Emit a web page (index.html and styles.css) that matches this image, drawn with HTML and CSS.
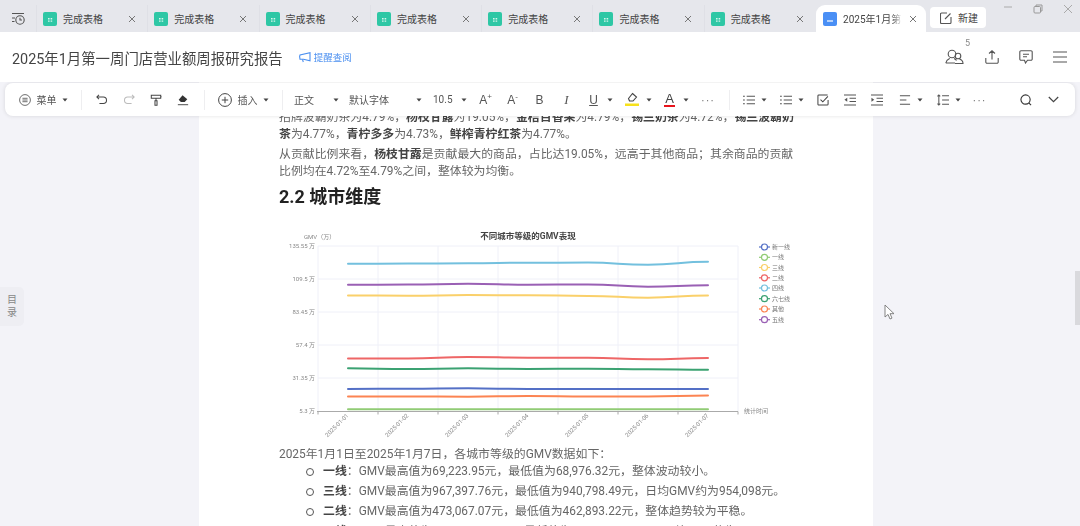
FILE: index.html
```html
<!DOCTYPE html>
<html lang="zh-CN">

<head>
    <meta charset="UTF-8">
    <meta name="viewport" content="width=device-width, initial-scale=1.0">
    <title>2025年1月第一周门店营业额周报研究报告</title>
    <link rel="stylesheet" href="styles.css">
</head>

<body>
    <svg width="0" height="0" class="defs">
        <defs>
            <symbol id="sheet" viewBox="0 0 14 14">
                <rect width="14" height="14" rx="2" fill="#2ec7a5" />
                <path d="M5 6h1.6v1.4H5zM7.6 6h1.6v1.4H7.6zM5 8.4h1.6v1.4H5zM7.6 8.4h1.6v1.4H7.6z" fill="#d6f5ec" />
            </symbol>
            <symbol id="close" viewBox="0 0 8 8">
                <path d="M1 1l6 6M7 1L1 7" stroke="#777" stroke-width="1" fill="none" />
            </symbol>
            <symbol id="caret" viewBox="0 0 6 6">
                <path d="M.5 1.500h5L3 4.500z" fill="#444" />
            </symbol>
            <symbol id="list" viewBox="0 0 13 13">
                <path d="M4 2.500h9M4 6.500h9M4 10.500h9M0 2.500h2M0 6.500h2M0 10.500h2" stroke="#555" stroke-width="1.1" fill="none" />
            </symbol>
        </defs>
    </svg>

    <!-- tab strip -->
    <header class="tabbar">
        <div class="history">
            <svg width="15" height="14" viewBox="0 0 15 14" fill="none" stroke="#555" stroke-width="1.1">
                <path d="M1 1.500h12M1 6h3M1 9.500h2.500" />
                <circle cx="9" cy="8" r="4.200" />
                <path d="M9 5.800V8h2" />
            </svg>
        </div>
        <div class="tab"><svg class="tab-icon"><use href="#sheet" /></svg><span class="tab-name">完成表格</span><svg class="tab-close"><use href="#close" /></svg></div>
        <div class="tab"><svg class="tab-icon"><use href="#sheet" /></svg><span class="tab-name">完成表格</span><svg class="tab-close"><use href="#close" /></svg></div>
        <div class="tab"><svg class="tab-icon"><use href="#sheet" /></svg><span class="tab-name">完成表格</span><svg class="tab-close"><use href="#close" /></svg></div>
        <div class="tab"><svg class="tab-icon"><use href="#sheet" /></svg><span class="tab-name">完成表格</span><svg class="tab-close"><use href="#close" /></svg></div>
        <div class="tab"><svg class="tab-icon"><use href="#sheet" /></svg><span class="tab-name">完成表格</span><svg class="tab-close"><use href="#close" /></svg></div>
        <div class="tab"><svg class="tab-icon"><use href="#sheet" /></svg><span class="tab-name">完成表格</span><svg class="tab-close"><use href="#close" /></svg></div>
        <div class="tab"><svg class="tab-icon"><use href="#sheet" /></svg><span class="tab-name">完成表格</span><svg class="tab-close"><use href="#close" /></svg></div>
        <div class="tab tab-active">
            <svg class="tab-icon" viewBox="0 0 14 14">
                <rect width="14" height="14" rx="2" fill="#4a8ff5" />
                <path d="M4 9h6" stroke="#fff" stroke-width="1.200" />
            </svg>
            <span class="tab-name">2025年1月第</span>
            <svg class="tab-close"><use href="#close" /></svg>
        </div>
        <div class="new-btn">
            <svg width="12" height="12" viewBox="0 0 12 12" fill="none" stroke="#555" stroke-width="1.1">
                <path d="M7 1H1.500a1 1 0 0 0-1 1v8.500a1 1 0 0 0 1 1H10a1 1 0 0 0 1-1V5M5 7l5.500-5.500" />
            </svg>
            <span>新建</span>
        </div>
        <div class="win-controls">
            <svg width="10" height="10" viewBox="0 0 10 10"><path d="M1 3h8" stroke="#aaa" /></svg>
            <svg width="10" height="10" viewBox="0 0 10 10" fill="none" stroke="#999"><rect x="1" y="2.500" width="6.500" height="6.500" rx="1" /><path d="M3 2.500V1h6v6H7.500" /></svg>
            <svg width="10" height="10" viewBox="0 0 10 10"><path d="M1 1l8 8M9 1L1 9" stroke="#aaa" /></svg>
        </div>
    </header>

    <!-- document title row -->
    <section class="titlebar">
        <h1 class="doc-title">2025年1月第一周门店营业额周报研究报告</h1>
        <div class="remind">
            <svg width="12" height="11" viewBox="0 0 12 11" fill="none" stroke="#4a8ff0" stroke-width="1.1">
                <path d="M11 .8v8L4.500 7.200H1L.6 4.500 1 3z" />
                <path d="M3.500 7.500l.8 2.500" />
            </svg>
            <span>提醒查阅</span>
        </div>
        <div class="title-actions">
            <div class="users">
                <svg width="20" height="16" viewBox="0 0 20 16" fill="none" stroke="#555" stroke-width="1.1">
                    <circle cx="7" cy="5" r="3.800" />
                    <path d="M.8 14c.5-3 3-4 4-4.500M9 9.500c1 .5 2 1 2.500 2M.8 14H10" />
                    <circle cx="13" cy="7" r="2.800" />
                    <path d="M10 14.500h8c0-2.500-2-4-3.500-4.500" />
                </svg>
                <span class="users-count">5</span>
            </div>
            <svg width="14" height="14" viewBox="0 0 14 14" fill="none" stroke="#555" stroke-width="1.1">
                <path d="M7 9.500V1M4 3.500L7 .8l3 2.700M.8 8v4a1.200 1.200 0 0 0 1.200 1.200h10a1.200 1.200 0 0 0 1.200-1.200V8" />
            </svg>
            <svg width="14" height="14" viewBox="0 0 14 14" fill="none" stroke="#555" stroke-width="1.1">
                <path d="M2 .8h10a1.200 1.200 0 0 1 1.200 1.200v7A1.200 1.200 0 0 1 12 10.200H8.500L6.500 13l-1-2.800H2A1.200 1.200 0 0 1 .8 9V2A1.200 1.200 0 0 1 2 .8z" />
                <path d="M4 4.200h6M4 6.800h4" />
            </svg>
            <svg width="14" height="12" viewBox="0 0 14 12" stroke="#555" stroke-width="1.1">
                <path d="M0 1h14M0 6h14M0 11h14" />
            </svg>
        </div>
    </section>

    <main class="workspace">
        <!-- floating toolbar -->
        <div class="toolbar">
            <svg class="ico" viewBox="0 0 14 14" fill="none" stroke="#555" stroke-width="1"><circle cx="7" cy="7" r="6.300" /><path d="M4 5h6M4 7h6M4 9h6" /></svg>
            <span class="lbl m5">菜单</span>
            <svg class="caret m5"><use href="#caret" /></svg>
            <i class="sep m13"></i>

            <span class="btn m6"><svg class="ico" viewBox="0 0 14 14" fill="none" stroke="#444" stroke-width="1.200"><path d="M3.500 1L1 3.500 3.500 6M1 3.500h7.500a3.700 3.700 0 0 1 0 7.500H4" /></svg></span>
            <span class="btn"><svg class="ico" viewBox="0 0 14 14" fill="none" stroke="#bbb" stroke-width="1.200"><path d="M10.500 1L13 3.500 10.500 6M13 3.500H5.500a3.700 3.700 0 0 0 0 7.500H10" /></svg></span>
            <span class="btn"><svg class="ico" viewBox="0 0 14 14" fill="none" stroke="#444" stroke-width="1.200"><path d="M1.500 1.500h11v3.500h-11zM12.500 3.200h1M7 5v3M5.800 8h2.400v5H5.800z" /></svg></span>
            <span class="btn"><svg class="ico" viewBox="0 0 14 14"><path d="M6.500 1.500L12 6l-3 3.200H4.500L2 6.800z" fill="#333" /><path d="M1 12.500h12" stroke="#444" stroke-width="1.100" /></svg></span>
            <i class="sep m7"></i>

            <svg class="ico ico-lg m13" viewBox="0 0 14 14" fill="none" stroke="#444" stroke-width="1"><circle cx="7" cy="7" r="6.400" /><path d="M7 3.800v6.400M3.800 7h6.400" /></svg>
            <span class="lbl m5">插入</span>
            <svg class="caret m5"><use href="#caret" /></svg>
            <i class="sep m13"></i>

            <span class="lbl m11">正文</span>
            <svg class="caret m19"><use href="#caret" /></svg>
            <span class="lbl lbl-wide m10">默认字体</span>
            <svg class="caret m26"><use href="#caret" /></svg>
            <span class="lbl m11">10.5</span>
            <svg class="caret m7"><use href="#caret" /></svg>

            <span class="btn txt m5">A<sup>+</sup></span>
            <span class="btn txt">A<sup>-</sup></span>
            <span class="btn txt">B</span>
            <span class="btn txt txt-i">I</span>
            <span class="btn txt txt-u">U</span>
            <svg class="caret"><use href="#caret" /></svg>
            <span class="btn m5">
                <svg width="14" height="15" viewBox="0 0 14 15">
                    <path d="M7.500 1.500L11.500 5 8 9H4.500L3.500 6.500z" fill="none" stroke="#444" stroke-width="1.100" />
                    <rect x="0" y="11.500" width="14" height="2.500" fill="#f7e11b" />
                </svg>
            </span>
            <svg class="caret"><use href="#caret" /></svg>
            <span class="btn color-a m4"><span>A</span></span>
            <svg class="caret"><use href="#caret" /></svg>
            <span class="btn dots m5">···</span>
            <i class="sep m7"></i>

            <span class="btn btn-s m6"><svg class="ico" viewBox="0 0 13 13"><use href="#list" /></svg></span>
            <svg class="caret"><use href="#caret" /></svg>
            <span class="btn btn-s m7"><svg class="ico" viewBox="0 0 13 13"><use href="#list" /></svg></span>
            <svg class="caret"><use href="#caret" /></svg>
            <span class="btn m5"><svg class="ico" viewBox="0 0 13 13" fill="none" stroke="#444" stroke-width="1.100"><path d="M12 6.500V11a1 1 0 0 1-1 1H2a1 1 0 0 1-1-1V2a1 1 0 0 1 1-1h9.500M3.800 6l2.500 2.500L11.800 2.500" /></svg></span>
            <span class="btn"><svg class="ico" viewBox="0 0 13 13" fill="none" stroke="#555" stroke-width="1.100"><path d="M0 1h13M6 4.500h7M6 8h7M0 12h13" /><path d="M3.500 4v4.500L.5 6.200z" fill="#555" stroke="none" /></svg></span>
            <span class="btn"><svg class="ico" viewBox="0 0 13 13" fill="none" stroke="#555" stroke-width="1.100"><path d="M0 1h13M6 4.500h7M6 8h7M0 12h13" /><path d="M.5 4v4.500l3-2.300z" fill="#555" stroke="none" /></svg></span>
            <span class="btn btn-s m2"><svg class="ico" viewBox="0 0 13 13" stroke="#555" stroke-width="1.100"><path d="M1 2h11M1 6.500h7M1 11h11" /></svg></span>
            <svg class="caret"><use href="#caret" /></svg>
            <span class="btn btn-s m7"><svg class="ico" viewBox="0 0 13 13" fill="none" stroke="#555" stroke-width="1.100"><path d="M2 1v11M.5 2.500L2 1l1.500 1.500M.5 10.500L2 12l1.500-1.500M5.500 2H13M5.500 6.500H13M5.500 11H13" /></svg></span>
            <svg class="caret"><use href="#caret" /></svg>
            <span class="btn dots m5">···</span>

            <span class="btn push"><svg class="ico" viewBox="0 0 13 13" fill="none" stroke="#333" stroke-width="1.200"><circle cx="6" cy="6" r="5" /><path d="M9.500 9.500L12 12" /></svg></span>
            <span class="btn"><svg width="11" height="7" viewBox="0 0 11 7" fill="none" stroke="#444" stroke-width="1.200"><path d="M.8 1l4.700 4.700L10.200 1" /></svg></span>
        </div>

        <div class="toc">目<br>录</div>

        <article class="page">
            <p>招牌波霸奶茶为4.79%，<b>杨枝甘露</b>为19.05%，<b>金桔百香果</b>为4.79%，<b>锡兰奶茶</b>为4.72%，<b>锡兰波霸奶茶</b>为4.77%，<b>青柠多多</b>为4.73%，<b>鲜榨青柠红茶</b>为4.77%。</p>
            <p>从贡献比例来看，<b>杨枝甘露</b>是贡献最大的商品，占比达19.05%，远高于其他商品；其余商品的贡献比例均在4.72%至4.79%之间，整体较为均衡。</p>
            <h2>2.2 城市维度</h2>

            <svg class="chart" width="530" height="215" viewBox="280 225 530 215">
                <g class="grid">
                    <path d="M318 245V410M378 245V410M438 245V410M498 245V410M558 245V410M618 245V410M678 245V410M738 245V410" />
                    <path d="M318 245H738M318 278H738M318 311H738M318 344H738M318 377H738" />
                </g>
                <path class="axis" d="M317 410.500H738M318 410.500v3M378 410.500v3M438 410.500v3M498 410.500v3M558 410.500v3M618 410.500v3M678 410.500v3M738 410.500v3" />

                <text class="chart-title" x="528" y="237.500" text-anchor="middle">不同城市等级的GMV表现</text>
                <text class="tick" x="304" y="237.500">GMV（万）</text>
                <text class="tick" x="315" y="247" text-anchor="end">135.55 万</text>
                <text class="tick" x="315" y="280" text-anchor="end">109.5 万</text>
                <text class="tick" x="315" y="313" text-anchor="end">83.45 万</text>
                <text class="tick" x="315" y="346" text-anchor="end">57.4 万</text>
                <text class="tick" x="315" y="379" text-anchor="end">31.35 万</text>
                <text class="tick" x="315" y="412" text-anchor="end">5.3 万</text>
                <text class="tick" x="744" y="412">统计时间</text>

                <text class="tick" text-anchor="end" transform="translate(349 415) rotate(-45)">2025-01-01</text>
                <text class="tick" text-anchor="end" transform="translate(409 415) rotate(-45)">2025-01-02</text>
                <text class="tick" text-anchor="end" transform="translate(469 415) rotate(-45)">2025-01-03</text>
                <text class="tick" text-anchor="end" transform="translate(529 415) rotate(-45)">2025-01-04</text>
                <text class="tick" text-anchor="end" transform="translate(589 415) rotate(-45)">2025-01-05</text>
                <text class="tick" text-anchor="end" transform="translate(649 415) rotate(-45)">2025-01-06</text>
                <text class="tick" text-anchor="end" transform="translate(709 415) rotate(-45)">2025-01-07</text>

                <g class="series">
                    <path stroke="#73c0de" d="M348 262.700C378 262.700 378 262.600 408 262.600S438 262.300 468 262.300S498 261.700 528 261.700S558 261.600 588 261.600S618 263.700 648 263.700S678 260.800 708 260.800" />
                    <path stroke="#9a60b4" d="M348 283.700C378 283.700 378 283.600 408 283.600S438 282.700 468 282.700S498 283.700 528 283.700S558 283.400 588 283.400S618 285.700 648 285.700S678 284.300 708 284.300" />
                    <path stroke="#fad06a" d="M348 294.400C378 294.400 378 294.700 408 294.700S438 294.100 468 294.100S498 294.200 528 294.200S558 295 588 295S618 296.700 648 296.700S678 294.400 708 294.400" />
                    <path stroke="#ee6666" d="M348 357.400C378 357.400 378 357.400 408 357.400S438 356 468 356S498 356.700 528 356.700S558 356.700 588 356.700S618 358.200 648 358.200S678 357.100 708 357.100" />
                    <path stroke="#3ba272" d="M348 367.300C378 367.300 378 368 408 368S438 367.300 468 367.300S498 368 528 368S558 367.700 588 367.700S618 368.300 648 368.300S678 368.700 708 368.700" />
                    <path stroke="#5470c6" d="M348 388C378 388 378 387.700 408 387.700S438 387.300 468 387.300S498 388 528 388S558 388 588 388S618 388 648 388S678 388 708 388" />
                    <path stroke="#fc8452" d="M348 395.400C378 395.400 378 395.500 408 395.500S438 395.700 468 395.700S498 395 528 395S558 395.400 588 395.400S618 395.400 648 395.400S678 394.500 708 394.500" />
                    <path stroke="#91cc75" d="M348 408.200H708" />
                </g>

                <g class="legend">
                    <path stroke="#5470c6" d="M759 246h11" /><circle stroke="#5470c6" cx="764.500" cy="246" r="3" /><text x="772" y="248">新一线</text>
                    <path stroke="#91cc75" d="M759 256.300h11" /><circle stroke="#91cc75" cx="764.500" cy="256.300" r="3" /><text x="772" y="258.300">一线</text>
                    <path stroke="#fad06a" d="M759 266.500h11" /><circle stroke="#fad06a" cx="764.500" cy="266.500" r="3" /><text x="772" y="268.500">三线</text>
                    <path stroke="#ee6666" d="M759 276.800h11" /><circle stroke="#ee6666" cx="764.500" cy="276.800" r="3" /><text x="772" y="278.800">二线</text>
                    <path stroke="#73c0de" d="M759 287h11" /><circle stroke="#73c0de" cx="764.500" cy="287" r="3" /><text x="772" y="289">四线</text>
                    <path stroke="#3ba272" d="M759 297.700h11" /><circle stroke="#3ba272" cx="764.500" cy="297.700" r="3" /><text x="772" y="299.700">六七线</text>
                    <path stroke="#fc8452" d="M759 308h11" /><circle stroke="#fc8452" cx="764.500" cy="308" r="3" /><text x="772" y="310">其他</text>
                    <path stroke="#9a60b4" d="M759 318.700h11" /><circle stroke="#9a60b4" cx="764.500" cy="318.700" r="3" /><text x="772" y="320.700">五线</text>
                </g>
            </svg>

            <p class="lead">2025年1月1日至2025年1月7日，各城市等级的GMV数据如下：</p>
            <ul class="city-list">
                <li><b>一线</b>：GMV最高值为69,223.95元，最低值为68,976.32元，整体波动较小。</li>
                <li><b>三线</b>：GMV最高值为967,397.76元，最低值为940,798.49元，日均GMV约为954,098元。</li>
                <li><b>二线</b>：GMV最高值为473,067.07元，最低值为462,893.22元，整体趋势较为平稳。</li>
                <li><b>四线</b>：GMV最高值为1,197,214.20元，最低值为1,172,603.12元，日均GMV约为1,183,095元。</li>
            </ul>
        </article>

        <svg class="cursor" width="12" height="17" viewBox="0 0 12 17">
            <path d="M1 1v12l3-2.600 2 4.600 2-.9-2-4.400h4z" fill="#fff" stroke="#777" stroke-width=".9" />
        </svg>
        <div class="scroll-thumb"></div>
    </main>
</body>

</html>
```

FILE: styles.css
```css
* {
    box-sizing: border-box;
}

html,
body {
    margin: 0;
    height: 100%;
    overflow: hidden;
}

body {
    display: flex;
    flex-direction: column;
    background: #fff;
    color: #555;
    font-family: Roboto, "Noto Sans CJK SC", sans-serif;
    /* the reference capture is slightly soft */
    filter: blur(0.4px);
}

.defs {
    position: absolute;
}

/* tab strip */
.tabbar {
    height: 32px;
    flex: none;
    display: flex;
    align-items: flex-end;
    background: #e6e7ec;
}

.history {
    width: 36px;
    height: 27px;
    display: flex;
    align-items: center;
    padding-left: 11px;
}

.tab {
    width: 111.3px;
    height: 27px;
    flex: none;
    display: flex;
    align-items: center;
    padding-left: 6px;
    border-left: 1px solid #dfe0e6;
    font-size: 10px;
    color: #444;
}

.tab-icon {
    width: 14px;
    height: 14px;
    flex: none;
}

.tab-name {
    margin-left: 6px;
    width: 40px;
    white-space: nowrap;
}

.tab-close {
    width: 8px;
    height: 8px;
    margin-left: 25px;
}

.tab-active {
    width: 110px;
    margin-left: 1px;
    background: #fff;
    border: 0;
    border-radius: 9px 9px 0 0;
    padding-left: 7px;
}

.tab-active .tab-name {
    width: 60px;
    overflow: hidden;
    -webkit-mask-image: linear-gradient(90deg, #000 80%, transparent);
    mask-image: linear-gradient(90deg, #000 80%, transparent);
}

.tab-active .tab-close {
    margin-left: 6px;
}

.new-btn {
    width: 56px;
    height: 21px;
    margin: 0 0 4px 4px;
    display: flex;
    align-items: center;
    gap: 6px;
    padding-left: 10px;
    background: #fff;
    border-radius: 4px;
    font-size: 10px;
    color: #444;
}

.win-controls {
    align-self: flex-start;
    margin-left: 17px;
    padding-top: 4px;
    display: flex;
    gap: 20px;
}

/* title row */
.titlebar {
    height: 50px;
    flex: none;
    display: flex;
    align-items: center;
    padding: 0 13px 0 12px;
}

.doc-title {
    margin: 0;
    font-size: 14.4px;
    font-weight: 400;
    color: #444;
    white-space: nowrap;
}

.remind {
    margin-left: 16px;
    display: flex;
    align-items: center;
    gap: 3px;
    font-size: 9.500px;
    color: #4a8ff0;
}

.title-actions {
    margin-left: auto;
    display: flex;
    align-items: center;
    gap: 20px;
}

.users {
    position: relative;
    display: flex;
}

.users-count {
    position: absolute;
    right: -5px;
    top: -11px;
    font-size: 9px;
    color: #888;
}

/* toolbar and document */
.workspace {
    flex: 1;
    min-height: 0;
    position: relative;
    overflow: hidden;
    background: #f3f3f8;
}

.toolbar {
    position: absolute;
    z-index: 3;
    left: 5px;
    right: 5px;
    top: 1px;
    height: 33px;
    display: flex;
    align-items: center;
    padding: 0 8.5px 0 14px;
    background: #fff;
    border-radius: 8px;
    box-shadow: 0 0 4px rgba(0, 0, 0, 0.12);
    font-size: 10px;
    color: #555;
}

.ico {
    width: 12px;
    height: 12px;
    flex: none;
}

.ico-lg {
    width: 14px;
    height: 14px;
}

.lbl {
    width: 20px;
    flex: none;
    white-space: nowrap;
}

.lbl-wide {
    width: 41px;
}

.caret {
    width: 6px;
    height: 6px;
    flex: none;
}

.sep {
    width: 1px;
    height: 20px;
    flex: none;
    background: #eeeef0;
}

.btn {
    width: 27px;
    height: 20px;
    flex: none;
    display: flex;
    align-items: center;
    justify-content: center;
}

.btn-s {
    width: 24px;
}

.txt {
    font-family: "Liberation Sans", sans-serif;
    font-size: 12px;
    color: #555;
}

.txt sup {
    font-size: 8px;
    line-height: 1;
    margin-top: -6px;
}

.txt-i {
    font-style: italic;
    font-family: "Liberation Serif", serif;
    font-size: 13px;
}

.txt-u {
    text-decoration: underline;
}

.color-a span {
    font-family: "Liberation Sans", sans-serif;
    font-size: 13px;
    line-height: 13px;
    color: #444;
    border-bottom: 2.500px solid #e8141c;
    padding: 0 1.500px;
}

.dots {
    font-family: "Liberation Sans", sans-serif;
    font-size: 11px;
    letter-spacing: 1px;
    color: #777;
}

.push {
    margin-left: auto;
}

.m2 { margin-left: 2.500px; }
.m4 { margin-left: 4.500px; }
.m5 { margin-left: 5.500px; }
.m6 { margin-left: 6.500px; }
.m7 { margin-left: 7.500px; }
.m10 { margin-left: 10px; }
.m11 { margin-left: 11px; }
.m13 { margin-left: 13px; }
.m19 { margin-left: 19px; }
.m26 { margin-left: 26px; }

.toc {
    position: absolute;
    left: 0;
    top: 205px;
    width: 24px;
    height: 39px;
    padding-top: 6px;
    background: #eeeef3;
    border-radius: 0 5px 5px 0;
    text-align: center;
    font-size: 10px;
    line-height: 13px;
    color: #888;
}

.page {
    width: 674px;
    height: 100%;
    margin-left: 199px;
    padding: 26.500px 76px 0 80px;
    background: #fff;
    font-size: 11.9px;
    line-height: 17px;
    color: #666;
}

.page p {
    margin: 0 0 3px;
}

.page b {
    color: #444;
    font-weight: 700;
}

.page h2 {
    margin: 4px 0 17px;
    font-size: 18px;
    line-height: 25px;
    font-weight: 700;
    color: #222;
}

.chart {
    display: block;
    margin-left: 1px;
    margin-bottom: 5px;
}

.grid path {
    stroke: #eff0f8;
    fill: none;
}

.axis {
    stroke: #aaa;
    fill: none;
}

.chart-title {
    font-size: 8.5px;
    font-weight: 700;
    fill: #444;
}

.tick {
    font-size: 6px;
    fill: #888;
}

.series path {
    fill: none;
    stroke-width: 2;
    stroke-linecap: round;
}

.legend path {
    fill: none;
    stroke-width: 1.200;
}

.legend circle {
    fill: #fff;
    stroke-width: 1.200;
}

.legend text {
    font-size: 6px;
    fill: #777;
}

.page .lead {
    margin: 0;
}

.city-list {
    list-style: none;
    margin: 0;
    padding: 0 0 0 27px;
}

.city-list li {
    position: relative;
    padding-left: 17px;
    height: 20px;
    line-height: 17px;
    white-space: nowrap;
}

.city-list li::before {
    content: "";
    position: absolute;
    left: 0;
    top: 5px;
    width: 6px;
    height: 6px;
    border: 1px solid #555;
    border-radius: 50%;
}

.cursor {
    position: absolute;
    left: 884px;
    top: 222px;
}

.scroll-thumb {
    position: absolute;
    right: 0;
    top: 189px;
    width: 5px;
    height: 54px;
    background: #d9d9dd;
}
```
